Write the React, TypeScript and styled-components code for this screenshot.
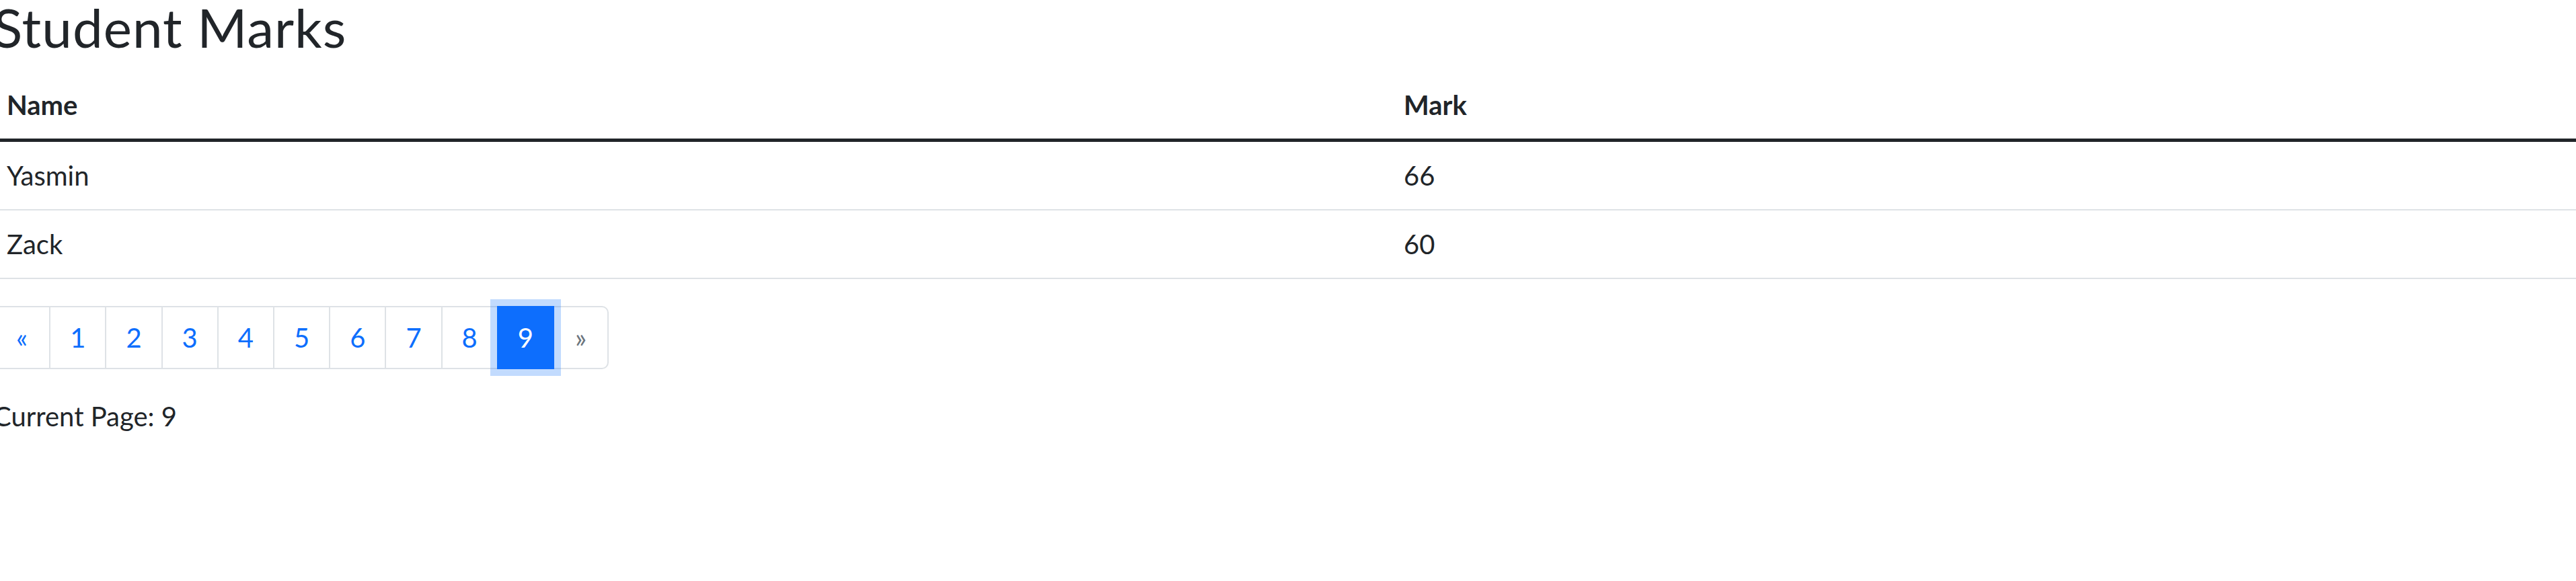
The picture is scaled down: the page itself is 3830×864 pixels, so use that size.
import React from "react";
import styled, { createGlobalStyle, css } from "styled-components";

const GlobalStyle = createGlobalStyle`
  *, *::before, *::after { box-sizing: border-box; }
  html, body { margin: 0; padding: 0; background: #fff; }
  body {
    font-family: "Lato", "Liberation Sans", sans-serif;
    font-size: 40px;
    line-height: 1.5;
    font-weight: 400;
    color: #212529;
    overflow: hidden;
  }
`;

const Page = styled.div`
  margin: -10px 0 0 -10px;
`;

const Title = styled.h2`
  margin: 0 0 18px;
  padding-top: 2px;
  font-size: 80px;
  font-weight: 400;
  line-height: 96px;
  letter-spacing: 1px;
  color: #212529;
`;

const Table = styled.table`
  width: 100%;
  margin-bottom: 40px;
  border-collapse: collapse;
  color: #212529;
`;

const HeadCell = styled.th<{ $width?: string }>`
  padding: 20px;
  text-align: left;
  font-weight: 700;
  line-height: 60px;
  border-bottom: 5px solid #212529;
  ${(p) => p.$width && css`width: ${p.$width};`}
`;

const Cell = styled.td`
  padding: 20px;
  line-height: 60px;
  border-bottom: 2px solid #dee2e6;
`;

const Pagination = styled.ul`
  display: flex;
  padding: 0;
  margin: 0 0 40px;
  list-style: none;
`;

const PageItem = styled.li`
  display: block;
  & + & { margin-left: -2px; }
`;

const PageLink = styled.a<{ $active?: boolean; $disabled?: boolean; $first?: boolean; $last?: boolean }>`
  position: relative;
  display: block;
  padding: 15px 29px;
  font-size: 40px;
  line-height: 60px;
  color: #0d6efd;
  text-decoration: none;
  background: #fff;
  border: 2px solid #dee2e6;
  cursor: pointer;
  ${(p) => p.$first && css`
    padding: 15px 32px;
    border-radius: 10px 0 0 10px;
  `}
  ${(p) => p.$last && css`
    padding: 15px 31px;
    border-radius: 0 10px 10px 0;
  `}
  ${(p) => p.$disabled && css`
    color: #6c757d;
    pointer-events: none;
  `}
  ${(p) => p.$active && css`
    z-index: 3;
    color: #fff;
    background: #0d6efd;
    border-color: #0d6efd;
    box-shadow: 0 0 0 10px rgba(13, 110, 253, 0.25);
  `}
`;

const CurrentPage = styled.p`
  margin: 0 0 40px;
  line-height: 60px;
`;

const rows = [
  { name: "Yasmin", mark: 66 },
  { name: "Zack", mark: 60 },
];

const pages = [1, 2, 3, 4, 5, 6, 7, 8, 9];
const current = 9;

export default function App() {
  return (
    <>
      <GlobalStyle />
      <Page>
        <Title>Student Marks</Title>
        <Table>
          <thead>
            <tr>
              <HeadCell $width="2077px">Name</HeadCell>
              <HeadCell>Mark</HeadCell>
            </tr>
          </thead>
          <tbody>
            {rows.map((r) => (
              <tr key={r.name}>
                <Cell>{r.name}</Cell>
                <Cell>{r.mark}</Cell>
              </tr>
            ))}
          </tbody>
        </Table>
        <Pagination>
          <PageItem>
            <PageLink $first>«</PageLink>
          </PageItem>
          {pages.map((n) => (
            <PageItem key={n}>
              <PageLink $active={n === current}>{n}</PageLink>
            </PageItem>
          ))}
          <PageItem>
            <PageLink $last $disabled>»</PageLink>
          </PageItem>
        </Pagination>
        <CurrentPage>Current Page: {current}</CurrentPage>
      </Page>
    </>
  );
}
